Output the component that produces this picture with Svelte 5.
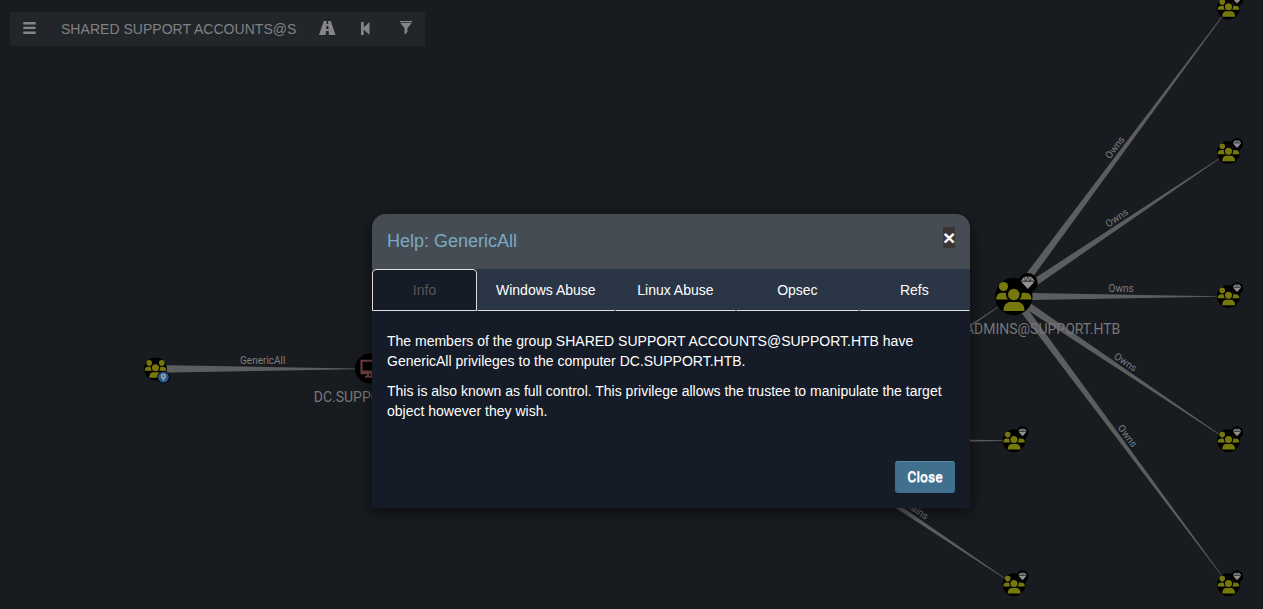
<script>
  const nodes = [
    { x: 155.5, y: 369, kind: 'start' },
    { x: 1228.5, y: 8 },
    { x: 1228.5, y: 152.4 },
    { x: 1228.5, y: 296.5 },
    { x: 1228.5, y: 440.7 },
    { x: 1228.5, y: 584.7 },
    { x: 1014, y: 440.7 },
    { x: 1014, y: 584.7 },
    { x: 1013.8, y: 296.5, scale: 1 }
  ];
  const hub = [1013.8, 296.5];
  const root = [799.3, 440.6];
  const edges = [
    { from: [155.5, 368.8], to: [370, 368.8], label: 'GenericAll', end: 15 },
    { from: hub, to: [1228.5, 8], label: 'Owns' },
    { from: hub, to: [1228.5, 152.4], label: 'Owns' },
    { from: hub, to: [1228.5, 296.5], label: 'Owns' },
    { from: hub, to: [1228.5, 440.7], label: 'Owns' },
    { from: hub, to: [1228.5, 584.7], label: 'Owns' },
    { from: root, to: hub, label: 'Contains', end: 18 },
    { from: root, to: [1014, 440.7], label: 'Contains' },
    { from: root, to: [1014, 584.7], label: 'Contains' }
  ].map((e) => {
    const dx = e.to[0] - e.from[0];
    const dy = e.to[1] - e.from[1];
    const len = Math.hypot(dx, dy);
    return { ...e, len: len - (e.end ?? 11), mid: len / 2, angle: (Math.atan2(dy, dx) * 180) / Math.PI };
  });
  const tabs = [
    { name: 'Info', width: 105 },
    { name: 'Windows Abuse', width: 137.6 },
    { name: 'Linux Abuse', width: 121.6 },
    { name: 'Opsec', width: 122.4 },
    { name: 'Refs', width: 111.4 }
  ];
  let active = $state('Info');
</script>

<main>
  <svg class="graph" width="1263" height="609" viewBox="0 0 1263 609">
    {#each edges as e}
      <g transform="translate({e.from[0]} {e.from[1]}) rotate({e.angle})">
        <path d="M0-3.9L{e.len}-.35V.35L0 3.9z" fill="#5c5d5f" />
      </g>
    {/each}
    {#each nodes as n}
      <g transform="translate({n.x} {n.y}) scale({n.scale ?? 0.61})">
        <circle r="18.7" fill="#000" />
        <g fill="#77780c">
          <circle cx="-10.3" cy="-10" r="4.6" />
          <circle cx="10.3" cy="-10" r="4.6" />
          <path d="M-17.6 3Q-17.6-3.8-12-3.8H-9Q-5-3.8-5 3zM17.6 3Q17.6-3.8 12-3.8H9Q5-3.8 5 3z" />
          <circle cy="-2" r="6.8" stroke="#000" stroke-width="2" />
          <path d="M-10.3 14.5C-10.3 8-7 5.5-3 5.5H3.4C7.4 5.5 10.7 8 10.7 14.5z" />
        </g>
        {#if n.kind === 'start'}
          <circle cx="13" cy="13.5" r="10.2" fill="#000" />
          <circle cx="13" cy="13.5" r="8.8" fill="#235a94" />
          <path d="M13 20C11.5 16.5 8.5 14.3 8.5 11.7A4.5 4.5 0 0 1 17.5 11.7C17.5 14.3 14.5 16.5 13 20z" fill="#9a9c9e" />
          <circle cx="13" cy="11.8" r="1.5" fill="#235a94" />
        {:else}
          <circle cx="14" cy="-13.6" r="9.9" fill="#000" />
          <path d="M10.4-19.7H17.7L20.8-15.7H7.1zM7.2-14.9H20.8L14-7.4z" fill="#929292" />
          <path d="M10.5-19.5L11.8-15.3L14-19.5L16.3-15.3L17.5-19.5" fill="none" stroke="#111" stroke-width=".6" />
        {/if}
      </g>
    {/each}
    <g transform="translate(370 368.5)">
      <circle r="15" fill="#000" />
      <path d="M-7.5-7.7H8.5V4.8H-8.5V-7.7zM-8.5 3H8.5M-2 5V8M2 5V8M-5 8.2H5" fill="none" stroke="#71403e" stroke-width="2" />
    </g>
    {#each edges as e}
      <text
        class="edge-label"
        transform="translate({e.from[0]} {e.from[1]}) rotate({e.angle}) translate({e.mid} -4.5)">{e.label}</text>
    {/each}
    <text class="node-label" x="369.8" y="401.7">DC.SUPPORT.HTB</text>
    <text class="node-label" x="1120.3" y="333.7" style:text-anchor="end">DOMAIN ADMINS@SUPPORT.HTB</text>
  </svg>

  <div class="search">
    <svg class="menu" width="13" height="12" viewBox="0 0 13 12"><path d="M.3 0H12.6V2.4H.3zM.3 4.7H12.6V7.1H.3zM.3 9.5H12.6V12H.3z" /></svg>
    <span class="query">SHARED SUPPORT ACCOUNTS@S</span>
    <svg class="road" width="17" height="14" viewBox="0 0 17 14"><path d="M4.8 0H7.7L7.5 3H9.3L9.1 0H11.8L16.5 14H9.9L9.6 10H7L6.7 14H0zM7.4 5L7.2 8H9.5L9.3 5z" /></svg>
    <svg class="back" width="9" height="13" viewBox="0 0 9 13"><path d="M0 0H2.7V5.4L8.5 0V13L2.7 7.5V13H0z" /></svg>
    <svg class="filter" width="12" height="14" viewBox="0 0 12 14"><path d="M0 0H12V1.2H0zM.5 2H11.5L7.4 7.5V11L4.6 13.7V7.5z" /></svg>
  </div>

  <section class="modal">
    <header>
      <h4>Help: GenericAll</h4>
      <button class="x" aria-label="Dismiss">×</button>
    </header>
    <nav>
      {#each tabs as t}
        <button class:active={active === t.name} style="width: {t.width}px" onclick={() => (active = t.name)}>{t.name}</button>
      {/each}
    </nav>
    <div class="body">
      <p>The members of the group SHARED SUPPORT ACCOUNTS@SUPPORT.HTB have GenericAll privileges to the computer DC.SUPPORT.HTB.</p>
      <p>This is also known as full control. This privilege allows the trustee to manipulate the target object however they wish.</p>
    </div>
    <footer><button class="close">Close</button></footer>
  </section>
</main>

<style>
  :global(body) { margin: 0; background: #181b1f; }
  main {
    position: relative;
    box-sizing: border-box;
    width: 1263px;
    height: 609px;
    padding: 12px 10px;
    overflow: hidden;
    background: #181b1f;
    font: 14px/20px 'Liberation Sans', Arial, sans-serif;
  }
  button { font: inherit; cursor: pointer; }
  .graph { position: absolute; inset: 0; }
  .edge-label { font: 10px Roboto, sans-serif; fill: #7d7e80; text-anchor: middle; }
  .node-label { font: 14px Roboto, sans-serif; fill: #77787a; text-anchor: middle; }

  .search {
    position: relative;
    display: flex;
    box-sizing: border-box;
    width: 415px;
    height: 34px;
    padding-left: 13px;
    background: #22262b;
    color: #808182;
  }
  .search svg { fill: #858585; flex: none; }
  .menu { margin-top: 10px; }
  .query { width: 235px; margin: 7px 0 0 25px; white-space: nowrap; letter-spacing: .03px; }
  .road { margin: 9px 0 0 23px; }
  .back { margin: 10px 0 0 25px; }
  .filter { margin: 9px 0 0 29.6px; }

  .modal {
    position: absolute;
    left: 372px;
    top: 214px;
    display: flex;
    flex-direction: column;
    width: 598px;
    height: 294px;
    border-radius: 14px 14px 0 0;
    background: #151c27;
    color: #fff;
    box-shadow: 0 5px 15px rgba(0, 0, 0, .5);
  }
  header {
    display: flex;
    justify-content: space-between;
    align-items: flex-start;
    box-sizing: border-box;
    height: 55px;
    padding: 13px 15px;
    border-radius: 14px 14px 0 0;
    background: #464c54;
  }
  h4 { margin: 1px 0 0; font-size: 18px; font-weight: 400; line-height: 26px; color: #79abc3; }
  .x {
    width: 12px;
    height: 21px;
    padding: 0;
    border: 0;
    background: #3c3536;
    color: #fff;
    font-size: 21px;
    font-weight: 700;
    line-height: 22px;
  }
  nav { display: flex; height: 42px; background: #2a3545; }
  nav button {
    box-sizing: border-box;
    flex: none;
    padding: 0;
    border: 1px solid transparent;
    border-bottom-color: #ddd;
    border-radius: 4px 4px 0 0;
    background: none;
    color: #fff;
  }
  nav .active { border-color: #ddd; background: #151c27; color: #555; }
  .body { flex: 1; padding: 20px 15px 0; }
  p { margin: 0 0 10px; }
  footer { display: flex; justify-content: flex-end; padding: 15px; }
  .close {
    width: 60px;
    height: 32px;
    padding: 0 0 1px;
    border: 0;
    border-top: 1px solid #5e8aa3;
    border-radius: 3px;
    background: #416f8e;
    color: #fff;
    font-family: Roboto, sans-serif;
    font-weight: 500;
    text-shadow: 0 1px 0 rgba(255, 255, 255, .6);
  }
</style>
